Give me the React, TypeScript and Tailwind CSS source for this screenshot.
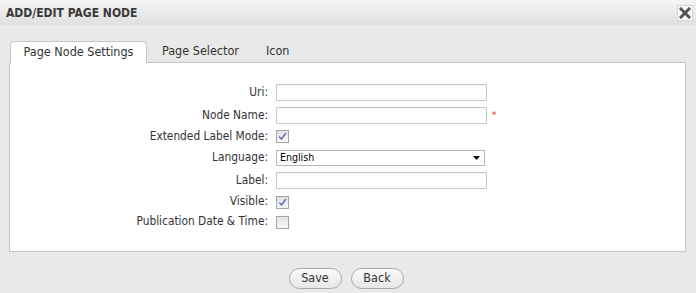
import React from "react";

const font = { fontFamily: "'DejaVu Sans Condensed', Tahoma, 'Liberation Sans', sans-serif" };

function Check({ checked }: { checked: boolean }) {
  return (
    <span className="inline-flex h-[13px] w-[13px] items-center justify-center border border-[#a4a4a4] bg-gradient-to-b from-[#e2e2e2] to-[#f8f8f8]">
      {checked && (
        <svg width="9" height="9" viewBox="0 0 9 9">
          <path d="M1.2 4.6 L3.5 7 L7.8 1.2" fill="none" stroke="#4a5fb0" strokeWidth="1.3" />
        </svg>
      )}
    </span>
  );
}

function Row({ label, h, children }: { label: string; h: string; children: React.ReactNode }) {
  return (
    <div className={`flex items-center ${h}`}>
      <div className="w-[266px] pr-[8px] text-right text-[11.8px] text-[#333]">{label}</div>
      {children}
    </div>
  );
}

function TextInput() {
  return <div className="h-[17px] w-[211px] rounded-[1px] border border-[#c8c8c8] bg-white shadow-[inset_0_1px_1px_rgba(0,0,0,0.05)]" />;
}

export default function App() {
  return (
    <div className="h-[293px] w-[696px] overflow-hidden bg-[#e9e9e9] text-[#333]" style={font}>
      <div className="flex h-[25px] items-center justify-between bg-gradient-to-b from-[#f4f4f4] to-[#e0e0e0] pl-[6px] pr-[3px]">
        <div className="text-[12px] font-bold text-[#3a3a3a]">ADD/EDIT PAGE NODE</div>
        <div className="flex h-[16px] w-[16px] items-center justify-center border border-[#d8d8d8] bg-[#f8f8f8]">
          <svg width="12" height="12" viewBox="0 0 12 12">
            <path d="M2 2 L10 10 M10 2 L2 10" stroke="#555" strokeWidth="3" strokeLinecap="square" />
          </svg>
        </div>
      </div>
      <div className="pl-[9px] pr-[10px] pt-[16px]">
        <div className="flex h-[21px] items-end text-[12.5px]">
          <div className="relative z-10 -mb-px ml-[1px] flex h-[22px] w-[137px] items-center justify-center rounded-t-[4px] border border-b-0 border-[#c6c6c6] bg-white">
            Page Node Settings
          </div>
          <div className="flex h-[21px] items-center pl-[15px]">Page Selector</div>
          <div className="flex h-[21px] items-center pl-[27px]">Icon</div>
        </div>
        <div className="h-[190px] border border-[#c6c6c6] bg-white pt-[18px]">
          <Row label="Uri:" h="h-[23px]"><TextInput /></Row>
          <Row label="Node Name:" h="h-[23px]">
            <TextInput />
            <span className="ml-[5px] text-[9px] font-bold text-[#e06a3a]">*</span>
          </Row>
          <Row label="Extended Label Mode:" h="h-[19px]"><Check checked /></Row>
          <Row label="Language:" h="h-[23px]">
            <div className="flex h-[16px] w-[209px] items-center justify-between border border-[#b8b8b8] bg-white pl-[3px] pr-[4px] text-[10.5px] text-black">
              <span>English</span>
              <svg width="7" height="4" viewBox="0 0 7 4"><path d="M0 0 H7 L3.5 4 Z" fill="#111" /></svg>
            </div>
          </Row>
          <Row label="Label:" h="h-[23px]"><TextInput /></Row>
          <Row label="Visible:" h="h-[20px]"><Check checked /></Row>
          <Row label="Publication Date & Time:" h="h-[20px]"><Check checked={false} /></Row>
        </div>
      </div>
      <div className="flex justify-center gap-[9px] pt-[16px] pr-[4px]">
        <button className="h-[21px] w-[53px] rounded-full border border-[#a8a8a8] bg-gradient-to-b from-[#fbfbfb] to-[#e6e6e6] text-[12.5px] text-[#333]">Save</button>
        <button className="h-[21px] w-[53px] rounded-full border border-[#a8a8a8] bg-gradient-to-b from-[#fbfbfb] to-[#e6e6e6] text-[12.5px] text-[#333]">Back</button>
      </div>
    </div>
  );
}
